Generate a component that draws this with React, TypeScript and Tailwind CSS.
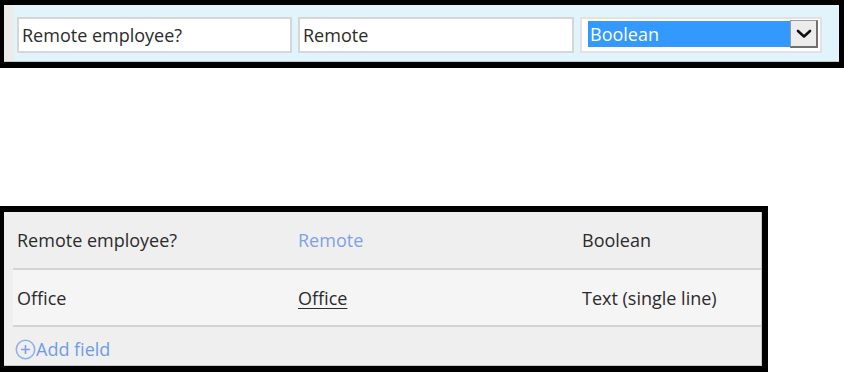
import React from 'react';

function Chevron() {
  return (
    <svg width="16" height="10" viewBox="0 0 16 10" fill="none">
      <path d="M2 2l6 5.5L14 2" stroke="#111" strokeWidth="2.6" strokeLinecap="round" strokeLinejoin="round" />
    </svg>
  );
}

function PlusCircle() {
  return (
    <svg width="21" height="21" viewBox="0 0 21 21" fill="none">
      <circle cx="10.5" cy="10.5" r="9.2" stroke="#8fb0ee" strokeWidth="1.6" />
      <path d="M10.5 6v9M6 10.5h9" stroke="#7aa0ea" strokeWidth="1.6" />
    </svg>
  );
}

const rows = [
  { label: 'Remote employee?', name: 'Remote', type: 'Boolean', link: true },
  { label: 'Office', name: 'Office', type: 'Text (single line)', link: false },
];

export default function App() {
  return (
    <div className="w-[844px] h-[372px] bg-white text-[18px] text-[#2b2b2b] font-['Open_Sans',sans-serif]">
      {/* edit row */}
      <div className="h-[68px] flex border-black border-t-[5px] border-l-4 border-r-[5px] border-b-[6px]">
        <div className="w-[10px] bg-[#ececec] border-b border-[#c4c8ca]" />
        <div className="flex-1 flex items-start gap-[6px] pl-[3px] pt-[12px] bg-[#e1f4fb] border-b border-[#bcc6ca]">
          <div className="w-[275px] h-[36px] bg-white border-2 border-[#d6d6d6] pl-[3px] flex items-center">Remote employee?</div>
          <div className="w-[276px] h-[36px] bg-white border-2 border-[#d6d6d6] pl-[3px] flex items-center">Remote</div>
          <div className="w-[242px] h-[36px] bg-white border-2 border-[#e2e2e2] pl-[6px] pt-[2px] flex items-start">
            <div className="w-[202px] h-[26px] bg-[#3399ff] text-white pl-[2px] leading-[26px]">Boolean</div>
            <div className="w-[28px] h-[28px] -mt-[1px] bg-[#ececec] border border-[#9a9a9a] border-r-2 border-b-2 border-r-[#707070] border-b-[#707070] flex items-center justify-center">
              <Chevron />
            </div>
          </div>
        </div>
      </div>

      <div className="h-[138px]" />

      {/* list */}
      <div className="w-[768px] h-[166px] border-black border-t-[6px] border-l-4 border-r-[6px] border-b-[6px]">
        <div className="h-full bg-[#efefef] pl-[9px] border-r border-b border-[#c8c8c8] flex flex-col">
          {rows.map((r, i) => (
            <div
              key={r.label}
              className={`grid grid-cols-[281px_284px_1fr] items-center border-b-2 border-[#d4d4d4] ${i === 0 ? 'h-[58px] pt-[1px]' : 'h-[57px] pt-[1px] bg-[#f5f5f5]'}`}
            >
              <div className="pl-[4px]">{r.label}</div>
              <div className={`pl-[4px] ${r.link ? 'text-[#7ea2ea]' : 'underline underline-offset-[3px]'}`}>{r.name}</div>
              <div className="pl-[4px]">{r.type}</div>
            </div>
          ))}
          <div className="flex-1 flex items-center pl-[2px] pt-[6px] text-[#6f9be6]">
            <PlusCircle />
            <span className="leading-none">Add field</span>
          </div>
        </div>
      </div>
    </div>
  );
}
